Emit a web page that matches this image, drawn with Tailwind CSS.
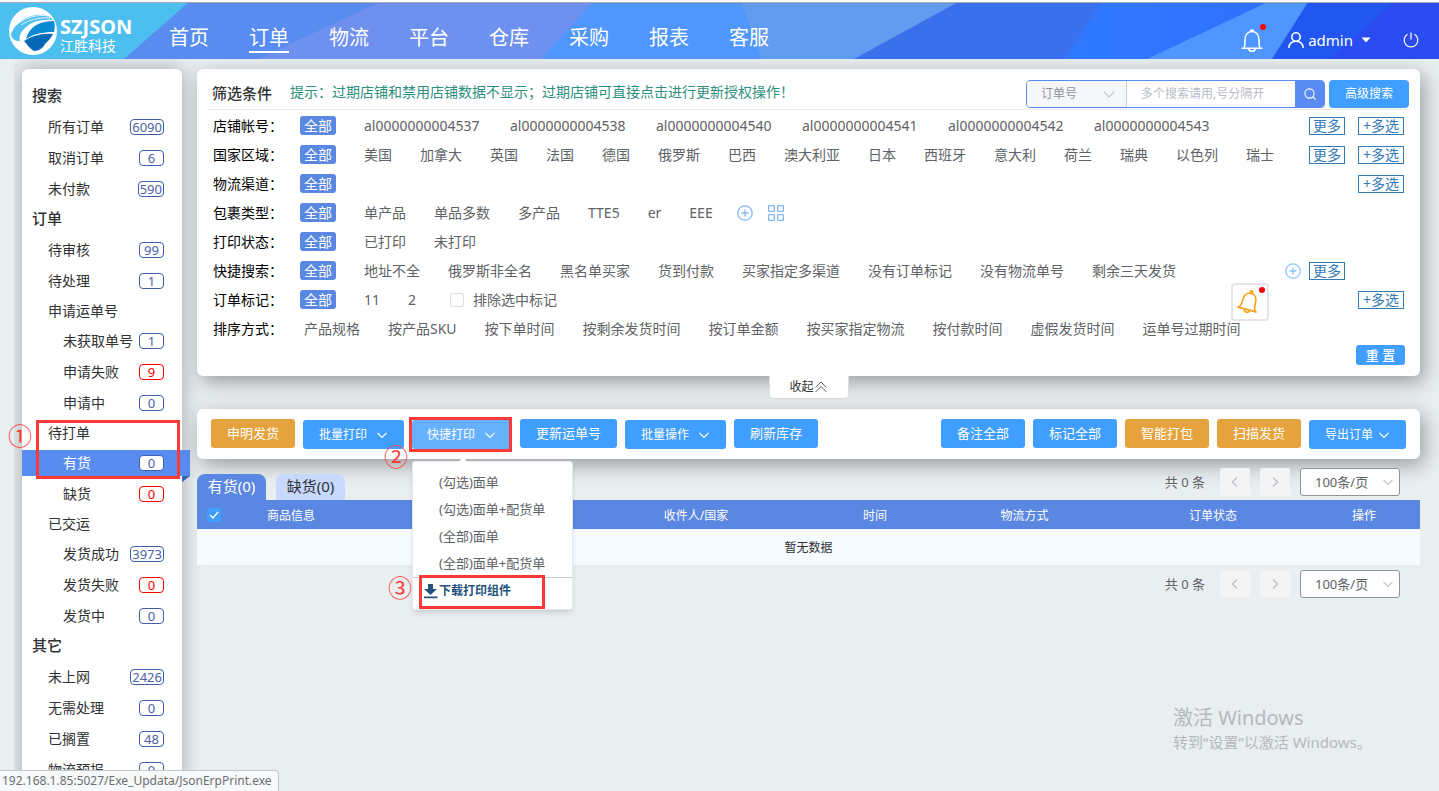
<!DOCTYPE html>
<html lang="zh-CN">
<head>
<meta charset="utf-8">
<title>订单管理</title>
<script src="https://cdn.jsdelivr.net/npm/@tailwindcss/browser@4"></script>
</head>
<body class="h-screen overflow-hidden relative flex flex-col bg-[#e9eef1] text-[#303133] text-sm font-['Noto_Sans','Noto_Sans_CJK_SC',sans-serif]">
<svg class="hidden">
  <symbol id="chev" viewBox="0 0 12 12"><path d="M1.500 4l4.500 4.500L10.500 4" fill="none" stroke="currentColor" stroke-width="1.100"/></symbol>
  <symbol id="plus" viewBox="0 0 16 16"><circle cx="8" cy="8" r="7.200" fill="none" stroke="currentColor" stroke-width="1.300"/><path d="M8 4.500v7M4.500 8h7" stroke="currentColor" stroke-width="1.300"/></symbol>
</svg>

<header class="relative shrink-0 h-[59px] border-t-2 border-white">
  <svg class="absolute inset-0 w-full h-full" viewBox="0 0 1439 57" preserveAspectRatio="none">
    <defs><linearGradient id="g1"><stop offset="0" stop-color="#3079ff"/><stop offset="1" stop-color="#2f69fe"/></linearGradient></defs>
    <rect width="1439" height="57" fill="#4dbfee"/>
    <path d="M189 0H1439V57H124z" fill="#588cf0"/>
    <path d="M380 0H1439V57H258z" fill="#6e90ee"/>
    <path d="M593 0H1439V57H541z" fill="#4f97ff"/>
    <path d="M741 0H1439V57H762z" fill="#629cf0"/>
    <path d="M958 0H1439V57H854z" fill="#3a70eb"/>
    <path d="M1101 0H1439V57H1065z" fill="url(#g1)"/>
    <path d="M1268 0H1439V57H1147z" fill="#4f97ff"/>
    <path d="M1308 0H1439V57H1272z" fill="#2256f0"/>
    <path d="M1394 0H1439V57H1330z" fill="#2a4bf2"/>
    <rect width="1439" height="1" fill="#a9a9b0"/>
  </svg>
  <div class="relative h-full flex items-center text-white">
    <a href="#" class="flex items-center gap-[3px] pl-[9px] w-[169px]">
      <svg class="w-12 h-12 shrink-0" viewBox="0 0 48 48">
        <circle cx="24" cy="24" r="24" fill="#fff"/>
        <path d="M2 28C5 17 18 6 36 8c4 1 7 3 8 5C30 12 22 15 15 22c-4 4-5 8-4 12-5 0-8-2-9-6z" fill="#4dbfee"/>
        <path d="M7 18C16 11 28 7 39 9M12 18C20 13 30 10 41 11" stroke="#fff" stroke-width=".8" fill="none"/>
        <path d="M17 32C20 20 30 14 45 14c1 4 1 7 0 11-12 0-20 2-28 7z" fill="#0b8ad4"/>
        <path d="M15 34c8-5 18-8 29-7-2 4-5 7-8 10-2 4-6 7-11 7-4-2-7-7-10-10z" fill="#0468b5"/>
      </svg>
      <span class="flex flex-col pt-[9px]">
        <span class="font-bold text-xl leading-[22px]">SZJSON</span>
        <span class="text-sm leading-4">江胜科技</span>
      </span>
    </a>
    <nav class="flex gap-10 pt-[17px] text-xl leading-[26px]">
      <a href="#">首页</a>
      <a href="#" class="border-b-2 border-white">订单</a>
      <a href="#">物流</a>
      <a href="#">平台</a>
      <a href="#">仓库</a>
      <a href="#">采购</a>
      <a href="#">报表</a>
      <a href="#">客服</a>
    </nav>
    <div class="ml-auto flex items-center pr-5 pt-[18px]">
      <button class="relative" aria-label="通知">
        <svg class="w-6 h-6 block" viewBox="0 0 24 24" fill="none" stroke="#fff" stroke-width="1.600"><path d="M1.500 20.200h21M4 20c1-1.500 1-3 1-8 0-5 2.500-8.500 7-8.500s7 3.500 7 8.500c0 5 0 6.500 1 8M10.500 3.500a1.500 1.500 0 0 1 3 0M8.800 20.500a3.200 2.800 0 0 0 6.400 0"/></svg>
        <span class="absolute -top-1 -right-0.5 size-1.5 rounded-full bg-[#f00]"></span>
      </button>
      <button class="ml-6 flex items-center gap-1 text-[15px] leading-5">
        <svg class="w-4 h-4" viewBox="0 0 16 16" fill="none" stroke="#fff" stroke-width="1.600"><circle cx="8" cy="5" r="4.200"/><path d="M.8 16c.3-4 3-6.800 7.200-6.800s6.900 2.800 7.200 6.800"/></svg>
        admin
        <svg class="w-2.5 h-2.5 ml-1" viewBox="0 0 10 10"><path d="M.5 2.500h9L5 7.500z" fill="#fff"/></svg>
      </button>
      <button class="ml-8" aria-label="退出">
        <svg class="w-4 h-4 block" viewBox="0 0 16 16" fill="none" stroke="#fff" stroke-width="1.200"><path d="M8 .5v7M4.500 2.300a6.800 6.800 0 1 0 7 0"/></svg>
      </button>
    </div>
  </div>
</header>

<div class="flex-1 min-h-0 overflow-hidden flex items-start pt-2.5 pr-[19px] ml-3.5 pl-2 gap-[15px]">
  <aside class="w-40 shrink-0 bg-white rounded-md pt-3 pb-12 shadow-[0_0_20px_rgba(0,0,0,0.3)]">
    <h2 class="h-[30px] pl-2.5 flex items-center text-[15px] font-medium">搜索</h2>
    <a href="#" class="h-[31px] pl-[26px] pr-[18px] flex items-center justify-between">所有订单<span class="min-w-[25px] h-4 px-px border border-[#3f5fac] rounded text-[#4a62a8] text-[13px] leading-[15px] text-center">6090</span></a>
    <a href="#" class="h-[31px] pl-[26px] pr-[18px] flex items-center justify-between">取消订单<span class="min-w-[25px] h-4 px-px border border-[#3f5fac] rounded text-[#4a62a8] text-[13px] leading-[15px] text-center">6</span></a>
    <a href="#" class="h-[31px] pl-[26px] pr-[18px] flex items-center justify-between">未付款<span class="min-w-[25px] h-4 px-px border border-[#3f5fac] rounded text-[#4a62a8] text-[13px] leading-[15px] text-center">590</span></a>
    <h2 class="h-[30px] pl-2.5 flex items-center text-[15px] font-medium">订单</h2>
    <a href="#" class="h-[31px] pl-[26px] pr-[18px] flex items-center justify-between">待审核<span class="min-w-[25px] h-4 px-px border border-[#3f5fac] rounded text-[#4a62a8] text-[13px] leading-[15px] text-center">99</span></a>
    <a href="#" class="h-[31px] pl-[26px] pr-[18px] flex items-center justify-between">待处理<span class="min-w-[25px] h-4 px-px border border-[#3f5fac] rounded text-[#4a62a8] text-[13px] leading-[15px] text-center">1</span></a>
    <h3 class="h-[29px] pl-[26px] flex items-center">申请运单号</h3>
    <a href="#" class="h-[31px] pl-[41px] pr-[18px] flex items-center justify-between">未获取单号<span class="min-w-[25px] h-4 px-px border border-[#3f5fac] rounded text-[#4a62a8] text-[13px] leading-[15px] text-center">1</span></a>
    <a href="#" class="h-[31px] pl-[41px] pr-[18px] flex items-center justify-between">申请失败<span class="min-w-[25px] h-4 px-px border border-[#f00] rounded text-[#f00] text-[13px] leading-[15px] text-center">9</span></a>
    <a href="#" class="h-[31px] pl-[41px] pr-[18px] flex items-center justify-between">申请中<span class="min-w-[25px] h-4 px-px border border-[#3f5fac] rounded text-[#4a62a8] text-[13px] leading-[15px] text-center">0</span></a>
    <h3 class="h-[29px] pl-[26px] flex items-center">待打单</h3>
    <div class="h-[31px] flex items-center">
      <a href="#" class="relative shrink-0 w-[168px] h-[26px] pl-[41px] pr-[26px] flex items-center justify-between bg-[#588cf0] text-white">有货<span class="min-w-[25px] h-4 px-px border border-[#3f5fac] bg-white rounded text-[#4a62a8] text-[13px] leading-[15px] text-center">0</span>
        <svg class="absolute top-full right-0 w-2 h-1.5" viewBox="0 0 8 6"><path d="M0 0h8L0 6z" fill="#3c62b5"/></svg>
      </a>
    </div>
    <a href="#" class="h-[31px] pl-[41px] pr-[18px] flex items-center justify-between">缺货<span class="min-w-[25px] h-4 px-px border border-[#f00] rounded text-[#f00] text-[13px] leading-[15px] text-center">0</span></a>
    <h3 class="h-[29px] pl-[26px] flex items-center">已交运</h3>
    <a href="#" class="h-[31px] pl-[41px] pr-[18px] flex items-center justify-between">发货成功<span class="min-w-[25px] h-4 px-px border border-[#3f5fac] rounded text-[#4a62a8] text-[13px] leading-[15px] text-center">3973</span></a>
    <a href="#" class="h-[31px] pl-[41px] pr-[18px] flex items-center justify-between">发货失败<span class="min-w-[25px] h-4 px-px border border-[#f00] rounded text-[#f00] text-[13px] leading-[15px] text-center">0</span></a>
    <a href="#" class="h-[31px] pl-[41px] pr-[18px] flex items-center justify-between">发货中<span class="min-w-[25px] h-4 px-px border border-[#3f5fac] rounded text-[#4a62a8] text-[13px] leading-[15px] text-center">0</span></a>
    <h2 class="h-[30px] pl-2.5 flex items-center text-[15px] font-medium">其它</h2>
    <a href="#" class="h-[31px] pl-[26px] pr-[18px] flex items-center justify-between">未上网<span class="min-w-[25px] h-4 px-px border border-[#3f5fac] rounded text-[#4a62a8] text-[13px] leading-[15px] text-center">2426</span></a>
    <a href="#" class="h-[31px] pl-[26px] pr-[18px] flex items-center justify-between">无需处理<span class="min-w-[25px] h-4 px-px border border-[#3f5fac] rounded text-[#4a62a8] text-[13px] leading-[15px] text-center">0</span></a>
    <a href="#" class="h-[31px] pl-[26px] pr-[18px] flex items-center justify-between">已搁置<span class="min-w-[25px] h-4 px-px border border-[#3f5fac] rounded text-[#4a62a8] text-[13px] leading-[15px] text-center">48</span></a>
    <a href="#" class="h-[31px] pl-[26px] pr-[18px] flex items-center justify-between">物流预报<span class="min-w-[25px] h-4 px-px border border-[#3f5fac] rounded text-[#4a62a8] text-[13px] leading-[15px] text-center">0</span></a>
  </aside>

  <main class="flex-1 min-w-0">
    <section class="bg-white rounded-md shadow-[4px_6px_20px_rgba(0,0,0,0.35)] pb-[11px]">
      <div class="mx-2.5 h-[41px] border-b border-[#ebeef0] flex items-end">
        <h1 class="pl-[5px] w-[83px] self-center pt-2 text-[15px] leading-5 font-medium">筛选条件</h1>
        <p class="self-center pt-1.5 text-[#2d8f7d] leading-5">提示：过期店铺和禁用店铺数据不显示；过期店铺可直接点击进行更新授权操作！</p>
        <div class="ml-auto mb-px flex text-xs">
          <div class="flex h-7 w-[299px] border border-[#5a8bf2] rounded-sm overflow-hidden">
            <label class="relative w-[100px] bg-[#f5f7fa] border-r border-[#c8ccd4] text-[#909399]">
              <select aria-label="搜索类型" class="appearance-none w-full h-full pl-3.5"><option>订单号</option></select>
              <svg class="absolute right-2.5 top-1.5 size-3.5 text-[#c0c4cc] pointer-events-none"><use href="#chev"/></svg>
            </label>
            <input aria-label="搜索内容" class="flex-1 min-w-0 pl-3.5 placeholder:text-[#b8bcc6]" placeholder="多个搜索请用,号分隔开">
            <button aria-label="搜索" class="w-[29px] flex items-center justify-center bg-[#5a8bf2]"><svg class="w-3 h-3" viewBox="0 0 12 12" fill="none" stroke="#fff" stroke-width="1.100"><circle cx="5.500" cy="5.500" r="4.600"/><path d="M9 9l2.500 2.500"/></svg></button>
          </div>
          <button class="ml-1 mr-px w-20 h-7 rounded-sm bg-[#409eff] text-white">高级搜索</button>
        </div>
      </div>

      <div class="px-4 pt-px text-[#606266]">
        <div class="h-[29px] flex items-center gap-7">
          <span class="w-[59px] text-black whitespace-nowrap">店铺帐号：</span><button class="px-1 h-[19px] leading-[18px] rounded-[3px] bg-[#5a87e1] text-white">全部</button>
          <a href="#" class="min-w-[118px]">al0000000004537</a><a href="#" class="min-w-[118px]">al0000000004538</a><a href="#" class="min-w-[118px]">al0000000004540</a><a href="#" class="min-w-[118px]">al0000000004541</a><a href="#" class="min-w-[118px]">al0000000004542</a><a href="#" class="min-w-[118px]">al0000000004543</a>
          <span class="ml-auto flex gap-[13px] leading-4 text-[#337ab7]"><button class="w-9 h-[18px] border border-[#337ab7]">更多</button><button class="w-[46px] h-[18px] border border-[#337ab7]">+多选</button></span>
        </div>
        <div class="h-[29px] flex items-center gap-7">
          <span class="w-[59px] text-black whitespace-nowrap">国家区域：</span><button class="px-1 h-[19px] leading-[18px] rounded-[3px] bg-[#5a87e1] text-white">全部</button>
          <a href="#">美国</a><a href="#">加拿大</a><a href="#">英国</a><a href="#">法国</a><a href="#">德国</a><a href="#">俄罗斯</a><a href="#">巴西</a><a href="#">澳大利亚</a><a href="#">日本</a><a href="#">西班牙</a><a href="#">意大利</a><a href="#">荷兰</a><a href="#">瑞典</a><a href="#">以色列</a><a href="#">瑞士</a>
          <span class="ml-auto flex gap-[13px] leading-4 text-[#337ab7]"><button class="w-9 h-[18px] border border-[#337ab7]">更多</button><button class="w-[46px] h-[18px] border border-[#337ab7]">+多选</button></span>
        </div>
        <div class="h-[29px] flex items-center gap-7">
          <span class="w-[59px] text-black whitespace-nowrap">物流渠道：</span><button class="px-1 h-[19px] leading-[18px] rounded-[3px] bg-[#5a87e1] text-white">全部</button>
          <button class="ml-auto w-[46px] h-[18px] border border-[#337ab7] leading-4 text-[#337ab7]">+多选</button>
        </div>
        <div class="h-[29px] flex items-center gap-7">
          <span class="w-[59px] text-black whitespace-nowrap">包裹类型：</span><button class="px-1 h-[19px] leading-[18px] rounded-[3px] bg-[#5a87e1] text-white">全部</button>
          <a href="#">单产品</a><a href="#">单品多数</a><a href="#">多产品</a><a href="#">TTE5</a><a href="#">er</a><a href="#">EEE</a>
          <span class="-ml-1 flex gap-[15px] text-[#7fb8f5]">
            <button aria-label="添加类型"><svg class="size-4 block"><use href="#plus"/></svg></button>
            <button aria-label="类型列表"><svg class="size-4 block" viewBox="0 0 16 16" fill="none" stroke="currentColor" stroke-width="1.300"><rect x=".6" y=".6" width="5.800" height="5.800" rx="1"/><rect x="9.600" y=".6" width="5.800" height="5.800" rx="1"/><rect x=".6" y="9.600" width="5.800" height="5.800" rx="1"/><rect x="9.600" y="9.600" width="5.800" height="5.800" rx="1"/></svg></button>
          </span>
        </div>
        <div class="h-[29px] flex items-center gap-7">
          <span class="w-[59px] text-black whitespace-nowrap">打印状态：</span><button class="px-1 h-[19px] leading-[18px] rounded-[3px] bg-[#5a87e1] text-white">全部</button>
          <a href="#">已打印</a><a href="#">未打印</a>
        </div>
        <div class="h-[29px] flex items-center gap-7">
          <span class="w-[59px] text-black whitespace-nowrap">快捷搜索：</span><button class="px-1 h-[19px] leading-[18px] rounded-[3px] bg-[#5a87e1] text-white">全部</button>
          <a href="#">地址不全</a><a href="#">俄罗斯非全名</a><a href="#">黑名单买家</a><a href="#">货到付款</a><a href="#">买家指定多渠道</a><a href="#">没有订单标记</a><a href="#">没有物流单号</a><a href="#">剩余三天发货</a>
          <span class="ml-auto mr-[59px] flex items-center gap-2 leading-4 text-[#337ab7]"><button aria-label="添加搜索" class="text-[#8cc5ff]"><svg class="size-4 block"><use href="#plus"/></svg></button><button class="w-9 h-[18px] border border-[#337ab7]">更多</button></span>
        </div>
        <div class="h-[29px] flex items-center gap-7">
          <span class="w-[59px] text-black whitespace-nowrap">订单标记：</span><button class="px-1 h-[19px] leading-[18px] rounded-[3px] bg-[#5a87e1] text-white">全部</button>
          <a href="#">11</a><a href="#">2</a>
          <label class="ml-1.5 flex items-center gap-[9px]"><input type="checkbox" class="appearance-none size-3.5 border border-[#dcdfe6] rounded-xs bg-white">排除选中标记</label>
          <button class="ml-auto w-[46px] h-[18px] border border-[#337ab7] leading-4 text-[#337ab7]">+多选</button>
        </div>
        <div class="h-[29px] flex items-center gap-7">
          <span class="w-[63px] text-black whitespace-nowrap">排序方式：</span>
          <a href="#">产品规格</a><a href="#">按产品SKU</a><a href="#">按下单时间</a><a href="#">按剩余发货时间</a><a href="#">按订单金额</a><a href="#">按买家指定物流</a><a href="#">按付款时间</a><a href="#">虚假发货时间</a><a href="#">运单号过期时间</a>
        </div>
        <div class="flex justify-end pt-0.5 -mr-px"><button class="w-[49px] h-5 rounded-[3px] bg-[#409eff] text-white text-[13px] leading-5 font-medium">重 置</button></div>
      </div>
    </section>

    <button class="relative mx-auto w-20 h-[23px] flex items-center justify-center bg-white rounded-b border border-t-0 border-[#dcdfe2] text-xs">收起<svg class="w-3.5 h-3.5" viewBox="0 0 14 14" fill="none" stroke="#606266" stroke-width="1"><path d="M1.500 7.500L7 2l5.500 5.500M1.500 12L7 6.500l5.500 5.500"/></svg></button>

    <section class="mt-2.5 h-[50px] px-3.5 pt-2.5 flex items-start gap-2 bg-white rounded-md shadow-[4px_6px_20px_rgba(0,0,0,0.35)] text-[13px] text-white relative">
      <button class="h-[29px] px-4 rounded-[3px] bg-[#e6a23c]">申明发货</button>
      <button class="mt-px h-[29px] px-4 rounded-[3px] bg-[#409eff] text-xs flex items-center gap-[9px]">批量打印<svg class="size-3"><use href="#chev"/></svg></button>
      <div class="relative mt-px text-xs">
        <button class="h-[29px] pl-[15px] pr-4 rounded-[3px] bg-[#66b1ff] flex items-center gap-[9px]">快捷打印<svg class="size-3"><use href="#chev"/></svg></button>
        <div class="absolute z-10 top-[41px] left-0 w-[161px] h-[149px] bg-white border border-[#e6e9ef] rounded-[3px] shadow-md pt-[7px] text-[13px] text-[#606266]">
          <svg class="absolute -top-1.5 left-11 w-3 h-2" viewBox="0 0 12 8"><path d="M0 8L6 1l6 7z" fill="#fff"/></svg>
          <a href="#" class="block h-[27px] leading-[27px] pl-[26px]">(勾选)面单</a>
          <a href="#" class="block h-[27px] leading-[27px] pl-[26px]">(勾选)面单+配货单</a>
          <a href="#" class="block h-[27px] leading-[27px] pl-[26px]">(全部)面单</a>
          <a href="#" class="block h-[27px] leading-[27px] pl-[26px]">(全部)面单+配货单</a>
          <a href="#" class="flex items-center h-[26px] border-t border-[#ccc] pl-2.5 text-xs font-bold text-[#23527c]"><svg class="w-4 h-4" viewBox="0 0 16 16"><path d="M5 1h5v5h4L7.500 12 1 6h4zM1 13.500h13.500v1.800H1z" fill="#23527c"/></svg>下载打印组件</a>
        </div>
      </div>
      <button class="h-[29px] px-4 rounded-[3px] bg-[#409eff]">更新运单号</button>
      <button class="mt-px h-[29px] px-4 rounded-[3px] bg-[#409eff] text-xs flex items-center gap-[9px]">批量操作<svg class="size-3"><use href="#chev"/></svg></button>
      <button class="h-[29px] px-4 rounded-[3px] bg-[#409eff]">刷新库存</button>
      <button class="ml-auto h-[29px] px-4 rounded-[3px] bg-[#409eff]">备注全部</button>
      <button class="h-[29px] px-4 rounded-[3px] bg-[#409eff]">标记全部</button>
      <button class="h-[29px] px-4 rounded-[3px] bg-[#e6a23c]">智能打包</button>
      <button class="h-[29px] px-4 rounded-[3px] bg-[#e6a23c]">扫描发货</button>
      <button class="mt-px h-[29px] px-4 rounded-[3px] bg-[#409eff] text-xs flex items-center gap-[5px]">导出订单<svg class="size-3"><use href="#chev"/></svg></button>
    </section>

    <div class="mt-[9px] h-8 flex items-end justify-between">
      <div class="flex gap-2.5 text-[15px]">
        <button class="relative w-[69px] h-[26px] rounded-t-lg bg-[#5a87e1] text-white">有货(0)</button>
        <button class="relative w-[69px] h-[26px] rounded-t-lg bg-[#c7d9ff]">缺货(0)</button>
      </div>
      <div class="relative self-start h-7 flex items-center pr-5 text-[#606266] text-[13px]">
        共 0 条
        <button aria-label="上一页" class="ml-[15px] w-[30px] h-7 rounded-xs bg-[#f4f4f5] flex items-center justify-center"><svg class="size-3" viewBox="0 0 12 12" fill="none" stroke="#c0c4cc" stroke-width="1.600"><path d="M8 1.500L3.500 6l4.500 4.500"/></svg></button>
        <button aria-label="下一页" class="ml-2.5 w-[30px] h-7 rounded-xs bg-[#f4f4f5] flex items-center justify-center"><svg class="size-3" viewBox="0 0 12 12" fill="none" stroke="#c0c4cc" stroke-width="1.600"><path d="M4 1.500L8.500 6 4 10.500"/></svg></button>
        <label class="relative ml-2.5 text-[13px]"><select aria-label="每页条数" class="appearance-none block w-[100px] h-7 pl-3.5 border border-[#909399] rounded-[3px] bg-white"><option>100条/页</option></select><svg class="absolute right-1.5 top-2 size-3 text-[#c0c4cc] pointer-events-none"><use href="#chev"/></svg></label>
      </div>
    </div>

    <table class="w-full table-fixed text-xs">
      <colgroup><col class="w-[34px]"><col class="w-[120px]"><col><col class="w-[246px]"><col class="w-[112px]"><col class="w-[187px]"><col class="w-[190px]"><col class="w-[112px]"></colgroup>
      <thead class="bg-[#5a87e1] text-white"><tr class="h-[29px]">
        <th class="font-normal"><label class="block w-3.5 ml-2.5 relative"><input type="checkbox" checked aria-label="全选" class="appearance-none block size-3.5 rounded-xs bg-[#409eff]"><svg class="absolute inset-0 size-3.5 pointer-events-none" viewBox="0 0 14 14" fill="none" stroke="#fff" stroke-width="1.300"><path d="M3 7l3 3 5-6"/></svg></label></th>
        <th class="pt-0.5 font-normal">商品信息</th><th></th><th class="pt-0.5 font-normal">收件人/国家</th><th class="pt-0.5 font-normal">时间</th><th class="pt-0.5 font-normal">物流方式</th><th class="pt-0.5 font-normal">订单状态</th><th class="pt-0.5 font-normal">操作</th>
      </tr></thead>
      <tbody><tr class="h-9 bg-[#f5fbff]"><td colspan="8" class="pt-0.5 text-center">暂无数据</td></tr></tbody>
    </table>

    <div class="mt-[5px] h-7 flex items-center justify-end pr-5 text-[#606266] text-[13px]">
      共 0 条
      <button aria-label="上一页" class="ml-[15px] w-[30px] h-7 rounded-xs bg-[#f4f4f5] flex items-center justify-center"><svg class="size-3" viewBox="0 0 12 12" fill="none" stroke="#c0c4cc" stroke-width="1.600"><path d="M8 1.500L3.500 6l4.500 4.500"/></svg></button>
      <button aria-label="下一页" class="ml-2.5 w-[30px] h-7 rounded-xs bg-[#f4f4f5] flex items-center justify-center"><svg class="size-3" viewBox="0 0 12 12" fill="none" stroke="#c0c4cc" stroke-width="1.600"><path d="M4 1.500L8.500 6 4 10.500"/></svg></button>
      <label class="relative ml-2.5 text-[13px]"><select aria-label="每页条数" class="appearance-none block w-[100px] h-7 pl-3.5 border border-[#909399] rounded-[3px] bg-white"><option>100条/页</option></select><svg class="absolute right-1.5 top-2 size-3 text-[#c0c4cc] pointer-events-none"><use href="#chev"/></svg></label>
    </div>
  </main>
</div>

<!-- floating reminder -->
<button aria-label="消息提醒" class="absolute right-[170px] top-[283px] size-[38px] bg-white border-2 border-[#e5e5e5] rounded flex items-center justify-center">
  <svg class="size-7" viewBox="0 0 28 28" fill="none" stroke="#f9a11b" stroke-width="1.700"><g transform="rotate(15 14 14)"><path d="M3 22h20M4.500 21.500C6.500 20 6.500 17 6.500 13c0-4.500 2.500-7.500 6.500-7.500s6.500 3 6.500 7.500c0 4 0 7 2 8.500M10.500 22.500a2.600 2.400 0 0 0 5.200 0"/><circle cx="13" cy="4" r="1.200"/></g></svg>
  <span class="absolute top-0.5 right-0.5 size-1.5 rounded-full bg-[#f00]"></span>
</button>

<!-- tutorial callouts -->
<div class="absolute z-20 left-9 top-[420px] w-36 h-[59px] border-3 border-[#fb3a38] pointer-events-none"></div>
<div class="absolute z-20 left-[409px] top-[417px] w-[103px] h-[35px] border-3 border-[#fb3a38] pointer-events-none"></div>
<div class="absolute z-20 left-[419px] top-[575px] w-[126px] h-[34px] border-3 border-[#fb3a38] pointer-events-none"></div>
<span class="absolute z-20 left-2 top-[424px] text-2xl leading-6 text-[#fb3a38]">①</span>
<span class="absolute z-20 left-96 top-[445px] text-2xl leading-6 text-[#fb3a38]">②</span>
<span class="absolute z-20 left-[388px] top-[576px] text-2xl leading-6 text-[#fb3a38]">③</span>

<div class="absolute left-[1173px] top-[704px] text-[#b5b9bb]">
  <p class="text-xl leading-7">激活 Windows</p>
  <p class="text-[15px] leading-5 whitespace-nowrap">转到“设置”以激活 Windows。</p>
</div>
<div class="absolute left-0 bottom-0 h-[21px] pl-0.5 pr-1.5 bg-[#f8f9fa] border-t border-r border-[#c4c7ca] rounded-tr text-xs leading-5 text-[#6b6f73]">192.168.1.85:5027/Exe_Updata/JsonErpPrint.exe</div>
</body>
</html>
